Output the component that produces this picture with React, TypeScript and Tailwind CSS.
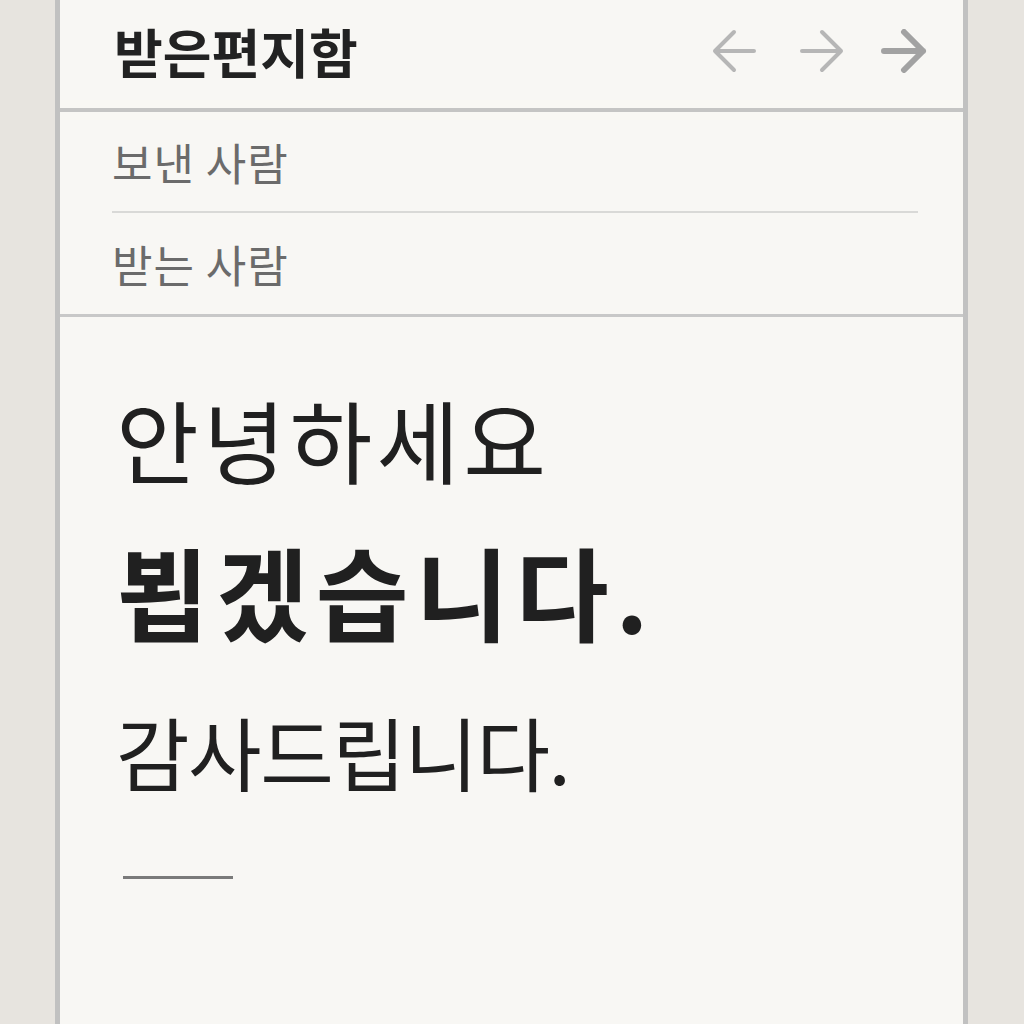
import React from 'react';

const FONT = 'font-["Noto_Sans_CJK_KR","Noto_Sans",sans-serif]';

const Arrow = ({ dir, className, strokeWidth }: { dir: 'left' | 'right'; className: string; strokeWidth: number }) => (
  <svg width="46" height="44" viewBox="0 0 46 44" className={className} fill="none">
    {dir === 'left' ? (
      <path d="M43 22H4M23 3L4 22l19 19" stroke="currentColor" strokeWidth={strokeWidth} strokeLinecap="round" strokeLinejoin="round" />
    ) : (
      <path d="M3 22h39M23 3l19 19-19 19" stroke="currentColor" strokeWidth={strokeWidth} strokeLinecap="round" strokeLinejoin="round" />
    )}
  </svg>
);

export default function App() {
  return (
    <div className={`w-[1024px] h-[1024px] bg-[#e7e4df] overflow-hidden ${FONT}`}>
      <div className="ml-[55px] w-[913px] h-[1024px] bg-[#f8f7f4] border-x-[5px] border-[#c1c1c1] flex flex-col">
        {/* header */}
        <div className="h-[112px] shrink-0 border-b-[4px] border-[#c4c4c4] flex items-center justify-between pl-[54px] pr-[36px] pb-[6px]">
          <h1 className="text-[53px] font-bold text-[#222222] leading-none">받은편지함</h1>
          <div className="flex items-center">
            <Arrow dir="left" className="text-[#b6b6b6]" strokeWidth={4} />
            <Arrow dir="right" className="ml-[42px] text-[#b6b6b6]" strokeWidth={4} />
            <Arrow dir="right" className="ml-[36px] text-[#a2a2a2]" strokeWidth={6} />
          </div>
        </div>

        {/* from / to */}
        <div className="shrink-0 border-b-[3px] border-[#c8c8c8] pl-[52px] pr-[45px]">
          <div className="h-[101px] flex items-center border-b-2 border-[#d9d9d7] text-[44px] text-[#6b6b6b] leading-none tracking-[1px]">
            보낸 사람
          </div>
          <div className="h-[101px] flex items-center text-[44px] text-[#6b6b6b] leading-none tracking-[1px]">
            받는 사람
          </div>
        </div>

        {/* body */}
        <div className="flex flex-col pl-[56px] pt-[71px] text-[#202020]">
          <p className="text-[90px] leading-[100px] tracking-[4px]">안녕하세요</p>
          <p className="mt-[47px] text-[101px] font-bold leading-[110px] tracking-[7px]">뵙겠습니다.</p>
          <p className="mt-[60px] text-[80px] leading-[90px] tracking-[-1.5px]">감사드립니다.</p>
          <div className="mt-[81px] ml-[7px] w-[110px] h-[3px] bg-[#7a7a7a]" />
        </div>
      </div>
    </div>
  );
}
